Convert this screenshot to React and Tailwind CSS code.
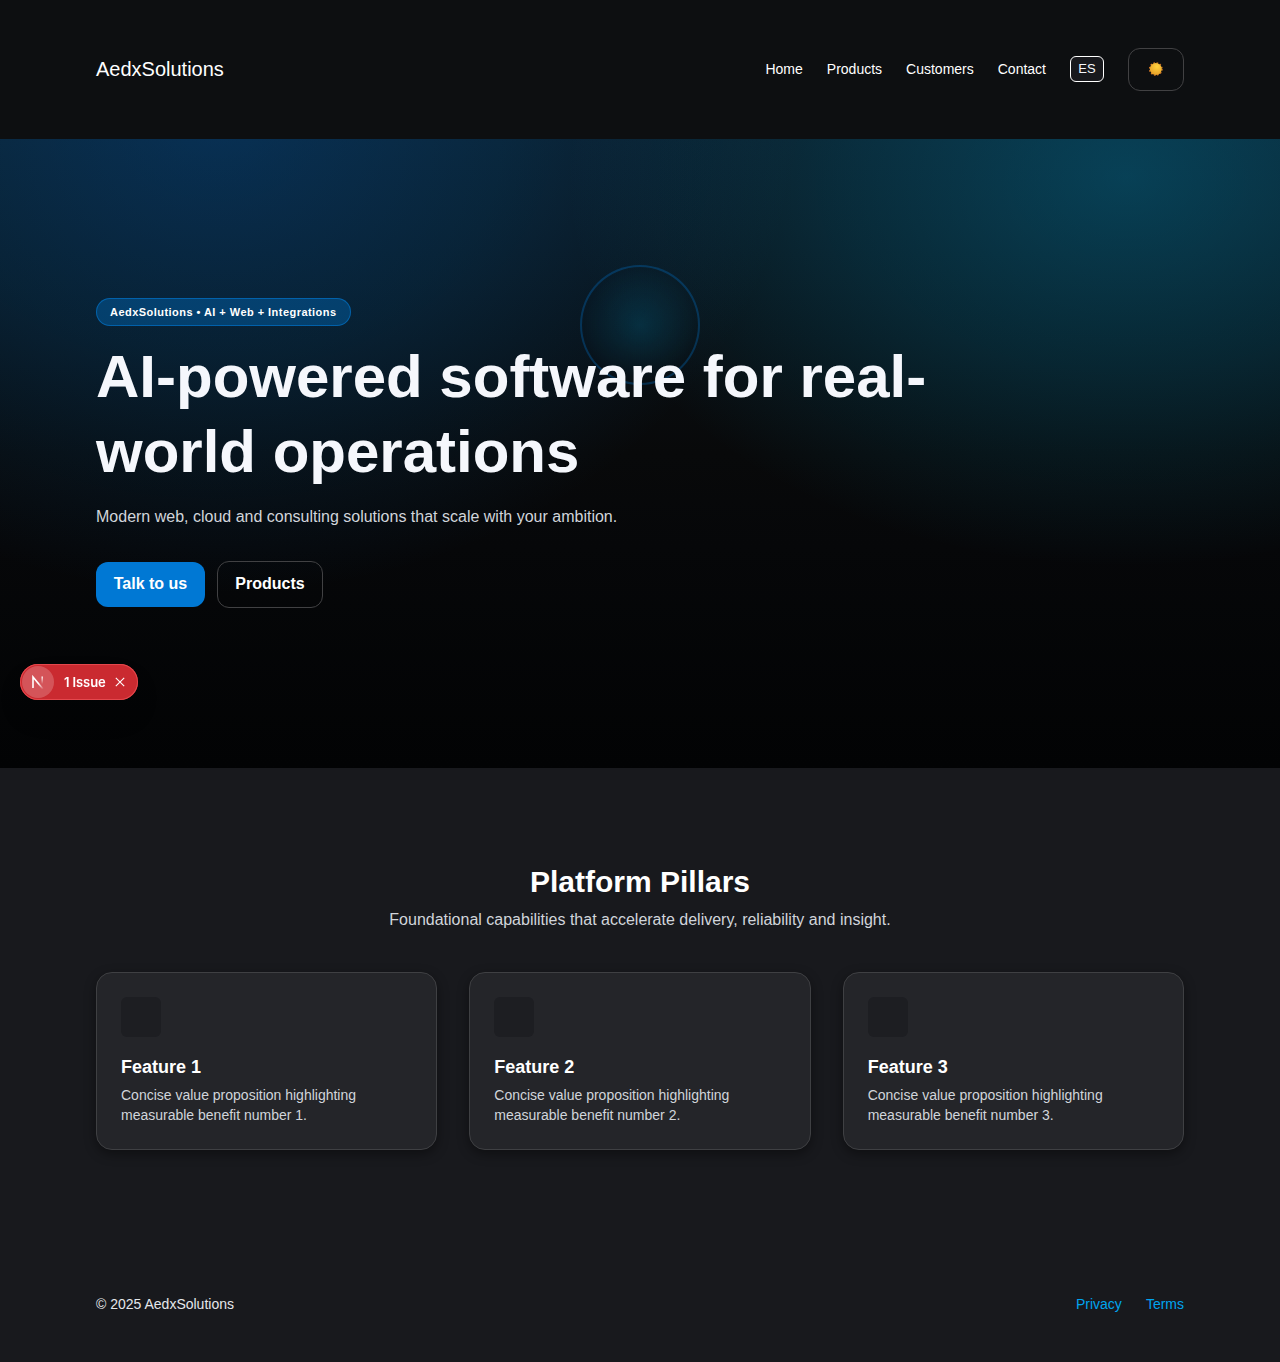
const font = 'font-["Liberation_Sans",Arial,sans-serif]';

const nav = ['Home', 'Products', 'Customers', 'Contact'];
const features = [1, 2, 3];

function Sun() {
  return (
    <svg className="-mt-0.5" width="14" height="14" viewBox="0 0 14 14" aria-hidden="true">
      <defs>
        <radialGradient id="sun" cx="0.6" cy="0.3" r="0.8">
          <stop offset="0" stopColor="#ffd23e" />
          <stop offset="1" stopColor="#e39a25" />
        </radialGradient>
      </defs>
      <circle cx="6.8" cy="7" r="6.2" fill="none" stroke="#d97a26" strokeWidth="1.4" strokeDasharray="1.6 1.65" />
      <circle cx="6.8" cy="7" r="6" fill="url(#sun)" />
    </svg>
  );
}

function IssueBadge() {
  return (
    <div className="fixed left-5 top-[664px] flex h-9 w-[118px] items-center rounded-full bg-[#ca2a30] p-0.5 shadow-[inset_0_0_0_1px_#e5484d,0_16px_32px_-8px_rgba(0,0,0,0.24)]">
      <div className="flex size-8 items-center justify-center rounded-full bg-white/20">
        <svg width="14" height="14" viewBox="0 0 14 14" fill="none">
          <defs>
            <linearGradient id="n1" x1="8" y1="8" x2="12.5" y2="14" gradientUnits="userSpaceOnUse">
              <stop stopColor="#fff" />
              <stop offset="1" stopColor="#fff" stopOpacity="0" />
            </linearGradient>
            <linearGradient id="n2" x1="11" y1="1" x2="11" y2="9" gradientUnits="userSpaceOnUse">
              <stop stopColor="#fff" />
              <stop offset="1" stopColor="#fff" stopOpacity="0" />
            </linearGradient>
          </defs>
          <path d="M2 13V2L12 14" stroke="url(#n1)" strokeWidth="1.6" />
          <path d="M11.2 1.5V10" stroke="url(#n2)" strokeWidth="1.5" />
        </svg>
      </div>
      <span className='ml-[10px] w-[42px] whitespace-nowrap font-["Inter",sans-serif] text-[13px] font-semibold leading-4 tracking-[-0.1px] text-white'>1 Issue</span>
      <svg className="ml-2" width="12" height="12" viewBox="0 0 12 12" stroke="#fff" strokeWidth="1.1">
        <path d="M1.8 1.8 10.2 10.2M10.2 1.8 1.8 10.2" />
      </svg>
    </div>
  );
}

export default function App() {
  return (
    <div className={`${font} min-h-[1362px] bg-[#18191d] text-white`}>
      <header className="flex h-[139px] items-center justify-between bg-[#0d0f11] px-24">
        <div className="-mt-0.5 text-xl leading-7">AedxSolutions</div>
        <nav className="flex items-center gap-6 text-sm">
          {nav.map((n) => (
            <a key={n} href="#" className="-mt-0.5">{n}</a>
          ))}
          <button className="-mt-px h-[26px] w-[34px] rounded-md border border-white bg-[#18191d] text-[13px] leading-4 text-[#f5f7fc]">ES</button>
          <button className="flex h-[43px] w-14 items-center justify-center rounded-xl border border-[#414143]"><Sun /></button>
        </nav>
      </header>

      <section className="relative h-[629px] overflow-hidden bg-[radial-gradient(560px_390px_at_88%_6%,rgba(0,160,212,0.31),rgba(0,160,212,0.17)_50%,transparent),radial-gradient(580px_480px_at_17%_-4%,rgba(0,110,212,0.29),rgba(0,115,200,0.18)_50%,transparent),linear-gradient(180deg,#0b1720_0%,#08090a_50%,#060709_65%,#020304_100%)] px-24 pt-[159px]">
        <div className="absolute left-[580px] top-[126px] size-[120px] rounded-full border-2 border-[#0078d4]/30 bg-[radial-gradient(circle,rgba(0,160,212,0.18),transparent_70%)]" />
        <div className="relative">
          <div className="flex h-7 w-[255px] items-center whitespace-nowrap rounded-full border border-[#0078d4]/60 bg-[#0078d4]/35 px-[13px] text-[11px] font-bold leading-4 tracking-[0.46px]">AedxSolutions • AI + Web + Integrations</div>
          <h1 className="mt-[13px] w-[880px] text-[60px] font-bold leading-[75px] text-[#f5f7fc]">AI-powered software for real-world operations</h1>
          <p className="mt-4 text-base leading-6 text-[#d1d5db]">Modern web, cloud and consulting solutions that scale with your ambition.</p>
          <div className="mt-8 flex items-center gap-3 font-bold">
            <a href="#" className="flex h-[45px] w-[109px] items-center justify-center rounded-xl bg-[#0078d4] pb-0.5">Talk to us</a>
            <a href="#" className="flex h-[47px] w-[106px] items-center justify-center rounded-xl border border-[#414143] pb-0.5">Products</a>
          </div>
        </div>
      </section>

      <section className="px-24 pt-24">
        <h2 className="text-center text-[30px] font-bold leading-9">Platform Pillars</h2>
        <p className="mt-2 text-center text-base leading-6 text-[#d1d5db]">Foundational capabilities that accelerate delivery, reliability and insight.</p>
        <div className="mt-10 grid grid-cols-3 gap-8">
          {features.map((n) => (
            <article key={n} className="h-[178px] rounded-2xl border border-[#3f4043] bg-[#242529] p-6 shadow-[0_4px_12px_rgba(0,0,0,0.4)]">
              <div className="size-10 rounded-md bg-[#1d1e22]" />
              <h3 className="mt-4 text-lg font-bold leading-7">{`Feature ${n}`}</h3>
              <p className="mt-1 text-sm leading-5 text-[#d1d5db]">{`Concise value proposition highlighting measurable benefit number ${n}.`}</p>
            </article>
          ))}
        </div>
      </section>

      <footer className="mt-36 flex items-center justify-between px-24 text-sm leading-5">
        <span className="text-[#e5e7eb]">© 2025 AedxSolutions</span>
        <div className="flex gap-6 text-[#00a4ef]">
          <a href="#">Privacy</a>
          <a href="#">Terms</a>
        </div>
      </footer>
      <IssueBadge />
    </div>
  );
}
